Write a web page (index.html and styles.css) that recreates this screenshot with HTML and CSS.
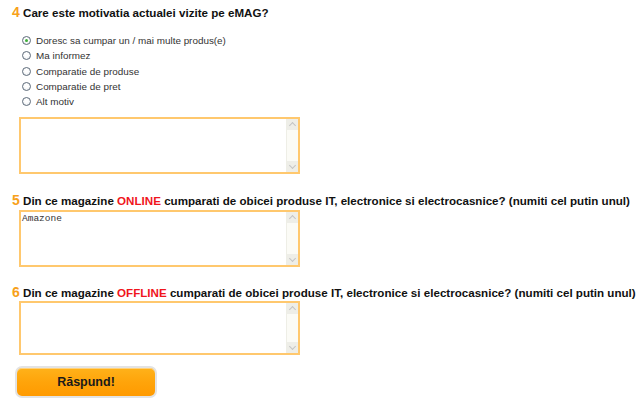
FILE: index.html
```html
<!DOCTYPE html>
<html lang="ro">
<head>
<meta charset="utf-8">
<title>Chestionar eMAG</title>
<link rel="stylesheet" href="styles.css">
</head>
<body>
<form class="survey">
  <section class="q q4">
    <h2 class="qtitle"><span class="num">4</span> Care este motivatia actualei vizite pe eMAG?</h2>
    <ul class="options">
      <li><label><input type="radio" name="m" checked> Doresc sa cumpar un / mai multe produs(e)</label></li>
      <li><label><input type="radio" name="m"> Ma informez</label></li>
      <li><label><input type="radio" name="m"> Comparatie de produse</label></li>
      <li><label><input type="radio" name="m"> Comparatie de pret</label></li>
      <li><label><input type="radio" name="m"> Alt motiv</label></li>
    </ul>
    <div class="ta">
      <textarea></textarea>
      <div class="sb"><span class="up"></span><span class="track"></span><span class="down"></span></div>
    </div>
  </section>
  <section class="q q5">
    <h2 class="qtitle"><span class="num">5</span> Din ce magazine <em>ONLINE</em> cumparati de obicei produse IT, electronice si electrocasnice? (numiti cel putin unul)</h2>
    <div class="ta">
      <textarea>Amazone</textarea>
      <div class="sb"><span class="up"></span><span class="track"></span><span class="down"></span></div>
    </div>
  </section>
  <section class="q q6">
    <h2 class="qtitle"><span class="num">6</span> Din ce magazine <em>OFFLINE</em> cumparati de obicei produse IT, electronice si electrocasnice? (numiti cel putin unul)</h2>
    <div class="ta">
      <textarea></textarea>
      <div class="sb"><span class="up"></span><span class="track"></span><span class="down"></span></div>
    </div>
  </section>
  <div class="actions">
    <button type="button" class="btn">Răspund!</button>
  </div>
</form>
</body>
</html>
```
FILE: styles.css
```css
html, body {
  margin: 0;
  padding: 0;
  background: #fff;
}
body {
  font-family: "Liberation Sans", Arial, sans-serif;
  color: #111;
}
.survey {
  padding: 4px 0 0 12px;
}
.qtitle {
  margin: 0;
  font-size: 11.6px;
  font-weight: bold;
  line-height: 16px;
  color: #111;
  white-space: nowrap;
}
.qtitle .num {
  color: #f7a11a;
  font-size: 14px;
}
.qtitle em {
  font-style: normal;
  color: #f0151c;
}
.options {
  list-style: none;
  margin: 12px 0 0 0;
  padding: 0 0 0 10px;
}
.options li {
  height: 15.3px;
  line-height: 15px;
}
.options label {
  display: flex;
  align-items: center;
  gap: 5px;
  font-size: 9.9px;
  color: #333;
}
.options input {
  appearance: none;
  -webkit-appearance: none;
  margin: 0;
  width: 9px;
  height: 9px;
  border-radius: 50%;
  border: 1px solid #5e6b7a;
  background: radial-gradient(circle at 50% 40%, #fff 30%, #e4e8ec 100%);
  box-sizing: border-box;
  position: relative;
}
.options input:checked::after {
  content: "";
  position: absolute;
  left: 2px;
  top: 2px;
  width: 3px;
  height: 3px;
  border-radius: 50%;
  background: #3fae3a;
}
.ta {
  display: flex;
  width: 281px;
  height: 57px;
  box-sizing: border-box;
  border: 2px solid #ffc86e;
  margin-left: 7px;
  background: #fff;
}
.q4 .ta { margin-top: 8px; }
.q5 .ta { margin-top: 1px; height: 57px; }
.q6 .ta { margin-top: 0; height: 54px; }
.ta textarea {
  flex: 1;
  border: 0;
  outline: 0;
  resize: none;
  margin: 0;
  padding: 1px 1px 0;
  font-family: "Liberation Mono", "Courier New", monospace;
  font-size: 9.5px;
  line-height: 12px;
  color: #333;
  background: #fff;
  overflow: hidden;
}
.sb {
  width: 11px;
  display: flex;
  flex-direction: column;
  background: #fbfbf6;
  border-left: 1px solid #eeeee6;
}
.sb .up, .sb .down {
  height: 11px;
  background: #eeeee8;
  position: relative;
}
.sb .track { flex: 1; }
.sb .up::after, .sb .down::after {
  content: "";
  position: absolute;
  left: 3px;
  width: 4px;
  height: 4px;
  border-left: 1px solid #c4c4c4;
  border-top: 1px solid #c4c4c4;
}
.sb .up::after { top: 4px; transform: rotate(45deg); }
.sb .down::after { top: 2px; transform: rotate(225deg); }
.q5 { margin-top: 18px; }
.q6 { margin-top: 17px; }
.actions {
  margin-top: 11px;
  padding-left: 3px;
}
.btn {
  width: 142px;
  height: 32px;
  border-radius: 7px;
  border: 2px solid #e3e3e3;
  background: linear-gradient(#ffb21a 0%, #ffa40a 50%, #ff9a00 100%);
  box-shadow: inset 0 1px 0 #ffd27a;
  font-family: "Liberation Sans", Arial, sans-serif;
  font-size: 12.5px;
  font-weight: bold;
  color: #1a1a1a;
  padding: 0;
  cursor: pointer;
}
```
